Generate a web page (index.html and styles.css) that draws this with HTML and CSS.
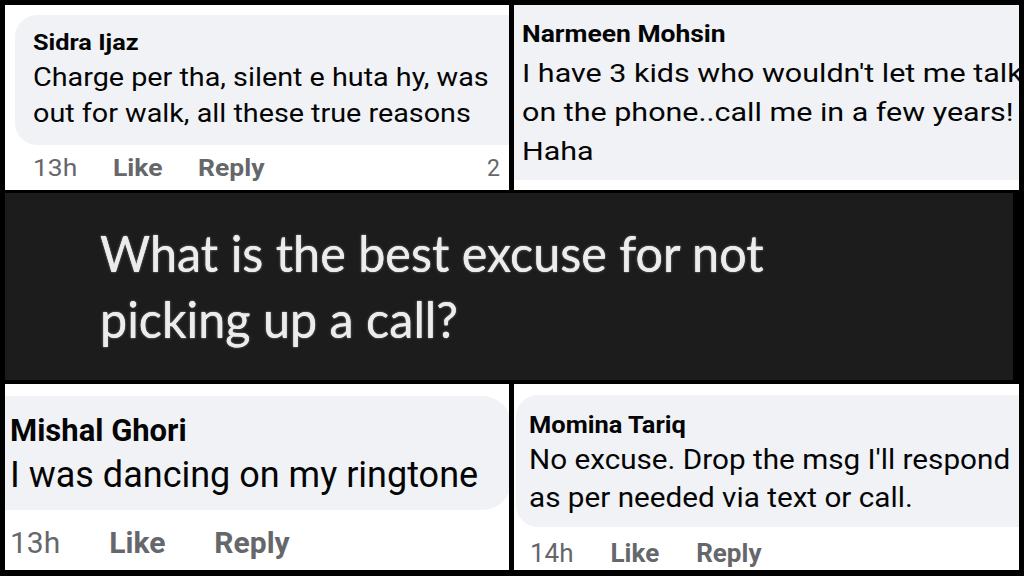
FILE: index.html
```html
<!DOCTYPE html>
<html lang="en">
<head>
<meta charset="utf-8">
<title>What is the best excuse for not picking up a call?</title>
<link rel="stylesheet" href="styles.css">
</head>
<body>
<div class="page">
  <div class="row row-top">
    <section class="panel tl">
      <div class="bubble">
        <div class="name stretch">Sidra Ijaz</div>
        <div class="text stretch">Charge per tha, silent e huta hy, was<br>out for walk, all these true reasons</div>
      </div>
      <div class="footer">
        <div class="actions stretch"><span class="time">13h</span><span class="act">Like</span><span class="act">Reply</span></div>
        <span class="count">2</span>
      </div>
    </section>
    <section class="panel tr">
      <div class="bubble">
        <div class="name stretch">Narmeen Mohsin</div>
        <div class="text stretch">I have 3 kids who wouldn't let me talk<br>on the phone..call me in a few years!<br>Haha</div>
      </div>
    </section>
  </div>

  <div class="mid">
    <p class="question">What is the best excuse for not<br>picking up a call?</p>
  </div>

  <div class="row row-bottom">
    <section class="panel bl">
      <div class="bubble">
        <div class="name">Mishal Ghori</div>
        <div class="text">I was dancing on my ringtone</div>
      </div>
      <div class="footer">
        <div class="actions"><span class="time">13h</span><span class="act">Like</span><span class="act">Reply</span></div>
      </div>
    </section>
    <section class="panel br">
      <div class="bubble">
        <div class="name stretch-s">Momina Tariq</div>
        <div class="text stretch-s">No excuse. Drop the msg I'll respond<br>as per needed via text or call.</div>
      </div>
      <div class="footer">
        <div class="actions"><span class="time">14h</span><span class="act">Like</span><span class="act">Reply</span></div>
      </div>
    </section>
  </div>
</div>
</body>
</html>
```

FILE: styles.css
```css
html, body {
  margin: 0;
  padding: 0;
}
body {
  width: 1024px;
  height: 576px;
  overflow: hidden;
  background: #000;
  font-family: Roboto, "Liberation Sans", sans-serif;
  color: #050505;
}
.page {
  padding: 5px;
  display: flex;
  flex-direction: column;
}
.row {
  display: grid;
  grid-template-columns: 504px 505px;
  column-gap: 5px;
}
.row-top { height: 185px; }
.row-bottom { height: 186px; margin-top: 4px; }

.panel {
  background: #fff;
  overflow: hidden;
}
.bubble {
  box-sizing: border-box;
  background: #f0f2f5;
  white-space: nowrap;
}
.name { font-weight: 700; }
.text { font-weight: 400; }
.stretch {
  transform: scaleX(1.15);
  transform-origin: 0 0;
}
.stretch-s {
  transform: scaleX(1.06);
  transform-origin: 0 0;
}
.footer {
  display: flex;
  justify-content: space-between;
  align-items: baseline;
  color: #65676b;
  white-space: nowrap;
}
.actions {
  display: flex;
  align-items: baseline;
}
.time { font-weight: 400; }
.act { font-weight: 700; }

/* top left */
.tl .bubble {
  margin: 10px -40px 0 10px;
  height: 130px;
  padding: 15px 0 0 18px;
  border-radius: 22px;
}
.tl .name { font-size: 22px; line-height: 26px; }
.tl .text { font-size: 25px; line-height: 36px; margin-top: 4px; }
.tl .footer {
  margin-top: 9px;
  padding: 0 9px 0 28px;
  font-size: 23px;
  line-height: 30px;
}
.tl .actions { gap: 31px; }
.count { font-weight: 400; }

/* top right */
.tr .bubble {
  margin: -20px -60px 0 -20px;
  height: 195px;
  padding: 36px 0 0 28px;
  border-radius: 22px;
}
.tr .name { font-size: 23px; line-height: 28px; }
.tr .text { font-size: 26.5px; line-height: 39px; margin-top: 4px; }

/* middle */
.mid {
  width: 1008px;
  height: 187px;
  margin-top: 3px;
  box-sizing: border-box;
  background: #1c1c1c;
  padding: 27px 0 0 95px;
}
.question {
  margin: 0;
  font-family: Lato, "Open Sans", sans-serif;
  font-size: 50px;
  line-height: 66px;
  color: #ececec;
  transform: scaleX(0.97);
  transform-origin: 0 0;
  text-shadow: 0 0 0.7px #ececec, 0 0 3px rgba(255, 255, 255, 0.35);
}

/* bottom left */
.bl .bubble {
  margin: 12px -3px 0 -30px;
  height: 114px;
  padding: 17px 0 0 35px;
  border-radius: 30px;
}
.bl .name { font-size: 31px; line-height: 36px; }
.bl .text { font-size: 36px; line-height: 42px; margin-top: 5px; }
.bl .footer {
  margin-top: 15px;
  padding-left: 5px;
  font-size: 30px;
  line-height: 36px;
}
.bl .actions { gap: 49px; }

/* bottom right */
.br .bubble {
  margin: 11px -40px 0 2px;
  height: 132px;
  padding: 16px 0 0 13px;
  border-radius: 22px;
}
.br .name { font-size: 24px; line-height: 28px; }
.br .text { font-size: 28px; line-height: 38px; margin-top: 2px; }
.br .footer {
  margin-top: 11px;
  padding-left: 16px;
  font-size: 26px;
  line-height: 30px;
}
.br .actions { gap: 37px; }
```
